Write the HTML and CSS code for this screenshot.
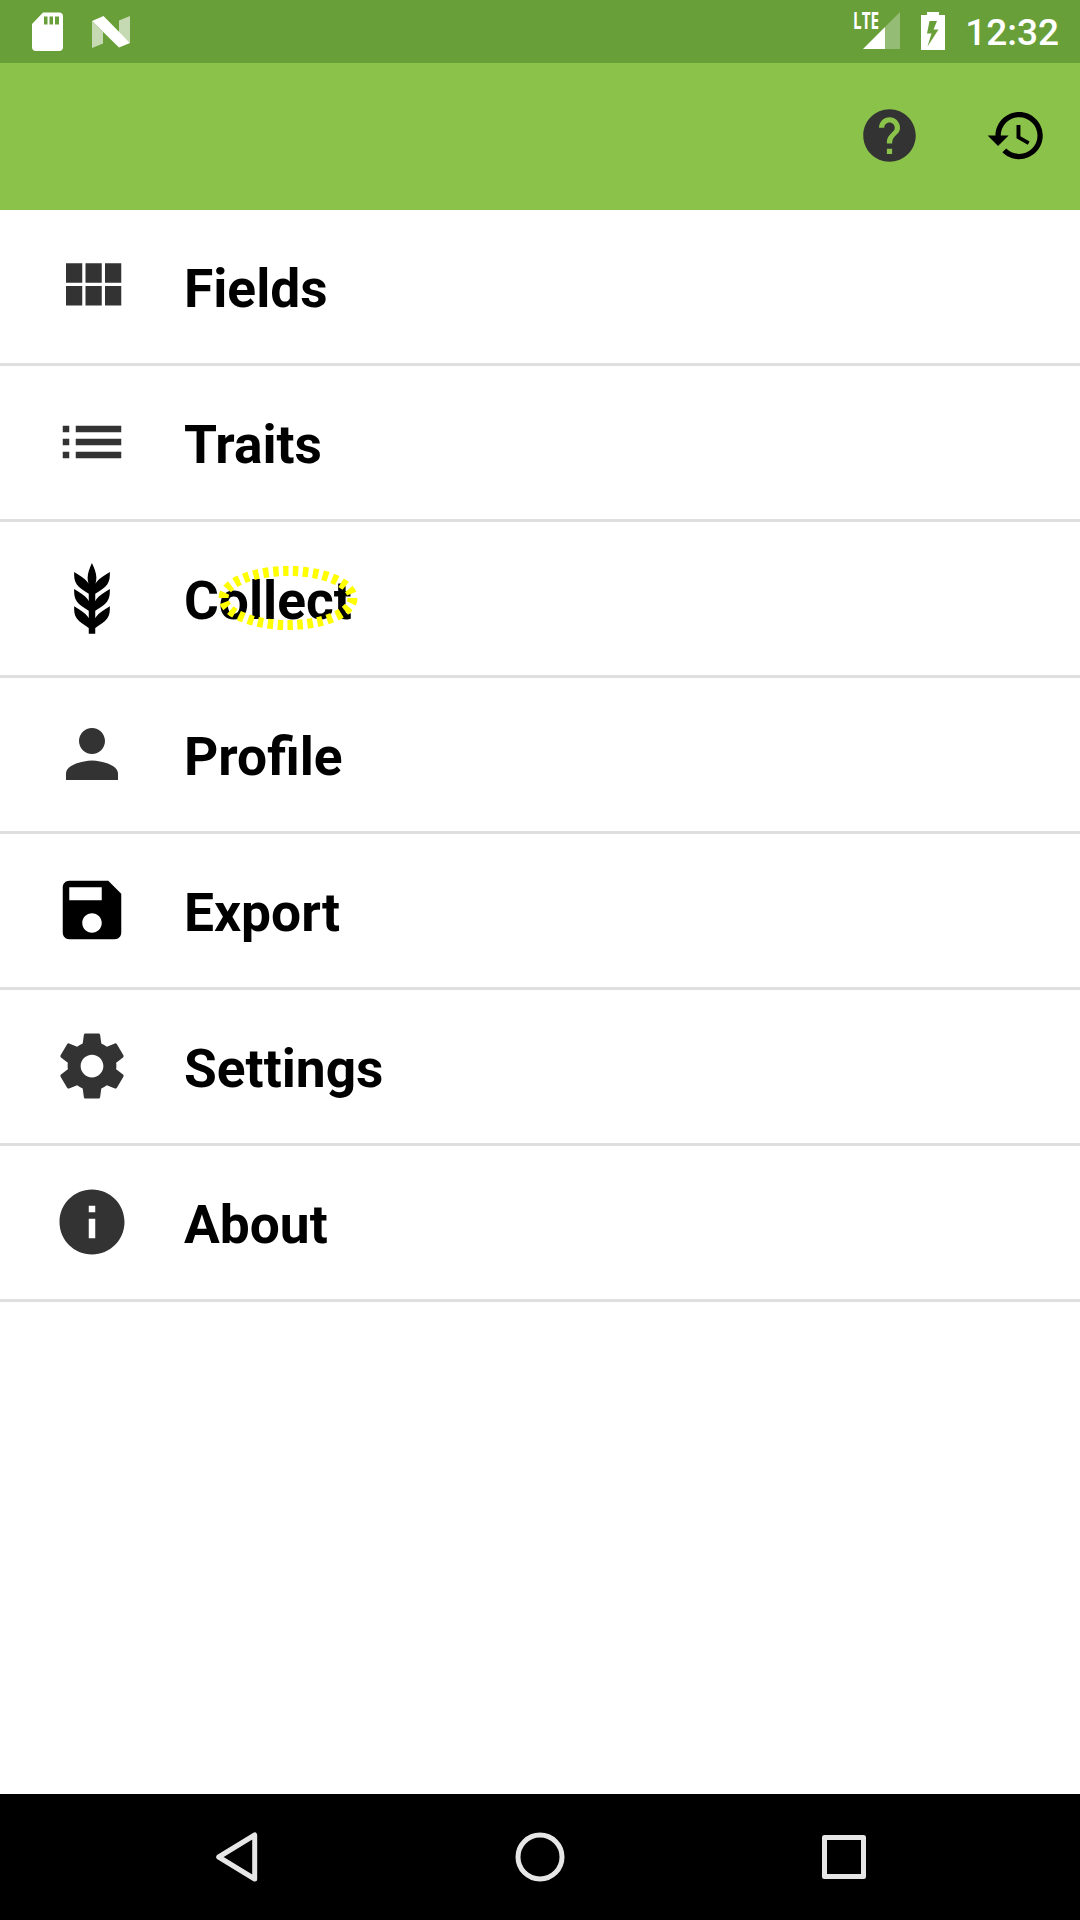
FILE: index.html
```html
<!DOCTYPE html>
<html lang="en">
<head>
<meta charset="utf-8">
<title>Field Book</title>
<link rel="stylesheet" href="styles.css">
</head>
<body>
<div class="screen">
  <div class="status-bar">
    <div class="status-group">
      <svg class="sd" viewBox="0 0 31 39" width="31" height="39"><path fill="#fff" fill-rule="evenodd" d="M11 .5H27a4 4 0 0 1 4 4V35a4 4 0 0 1-4 4H4a4 4 0 0 1-4-4V12ZM12 4.500v8h3.500v-8Zm5.500 0v8H21v-8Zm5.500 0v8h4v-8Z"/></svg>
      <svg class="nougat" viewBox="0 0 38 32" width="38" height="32"><path fill="#fff" opacity=".62" d="M0 5L11 16V27.500L0 32ZM38 0L27 4.500V17L38 27Z"/><path fill="#fff" d="M0 5L11.500 0L38 27L27 31.500Z"/></svg>
    </div>
    <div class="status-group">
      <div class="signal">
        <svg viewBox="0 0 37 37" width="37" height="37"><path fill="#fff" opacity=".3" d="M22 15L37 0V37H22Z"/><path fill="#fff" d="M0 37L22 15V37Z"/></svg>
        <span class="lte">LTE</span>
      </div>
      <svg class="battery" viewBox="0 0 24 38" width="24" height="38"><path fill="#fff" fill-rule="evenodd" d="M6 0H18V3H24V38H0V3H6ZM8.500 9L6 21.500H10.500L6.500 34.500L17.500 17.500H12.500L16 9Z"/></svg>
      <span class="clock">12:32</span>
    </div>
  </div>
  <header class="app-bar">
    <svg class="action help" viewBox="0 0 24 24"><path d="M12 2C6.480 2 2 6.480 2 12s4.480 10 10 10 10-4.480 10-10S17.520 2 12 2zm1 17h-2v-2h2v2zm2.070-7.750l-.9.920C13.450 12.900 13 13.500 13 15h-2v-.5c0-1.100.45-2.100 1.170-2.830l1.240-1.260c.37-.36.59-.86.59-1.410 0-1.100-.9-2-2-2s-2 .9-2 2H8c0-2.210 1.790-4 4-4s4 1.790 4 4c0 .88-.36 1.680-.93 2.250z"/></svg>
    <svg class="action history" viewBox="0 0 24 24"><path d="M13 3c-4.970 0-9 4.030-9 9H1l3.890 3.890.07.14L9 12H6c0-3.870 3.130-7 7-7s7 3.130 7 7-3.130 7-7 7c-1.930 0-3.680-.79-4.940-2.060l-1.420 1.420C8.270 19.990 10.510 21 13 21c4.970 0 9-4.030 9-9s-4.030-9-9-9zm-1 5v5l4.280 2.540.72-1.210-3.500-2.080V8H12z"/></svg>
  </header>
  <main class="menu">
    <div class="row"><svg class="icon" viewBox="0 0 24 24"><path d="M4 11h5V5H4v6zm0 7h5v-6H4v6zm6 0h5v-6h-5v6zm6 0h5v-6h-5v6zm-6-7h5V5h-5v6zm6-6v6h5V5h-5z"/></svg><span class="label">Fields</span></div>
    <div class="row"><svg class="icon" viewBox="0 0 24 24"><path d="M3 13h2v-2H3v2zm0 4h2v-2H3v2zm0-8h2V7H3v2zm4 4h14v-2H7v2zm0 4h14v-2H7v2zM7 7v2h14V7H7z"/></svg><span class="label">Traits</span></div>
    <div class="row"><svg class="icon black" viewBox="0 0 24 24"><path d="M7.330,18.330C6.500,17.170 6.500,15.830 6.500,14.500C8.170,15.500 9.830,16.500 10.670,17.670L11,18.230V15.950C9.500,15.050 8.080,14.130 7.330,13.080C6.500,11.920 6.500,10.580 6.500,9.250C8.170,10.250 9.830,11.250 10.670,12.420L11,13V10.700C9.500,9.800 8.080,8.880 7.330,7.830C6.500,6.670 6.500,5.330 6.500,4C8.170,5 9.830,6 10.670,7.170C10.770,7.310 10.860,7.460 10.940,7.620C10.770,7 10.660,6.420 10.650,5.820C10.640,4.310 11.300,2.760 11.960,1.210C12.650,2.690 13.340,4.180 13.350,5.690C13.360,6.320 13.250,6.960 13.070,7.590C13.150,7.450 13.230,7.310 13.330,7.170C14.170,6 15.830,5 17.500,4C17.500,5.330 17.500,6.670 16.670,7.830C15.920,8.880 14.500,9.800 13,10.700V13L13.330,12.420C14.170,11.250 15.830,10.250 17.500,9.250C17.500,10.580 17.500,11.920 16.670,13.080C15.920,14.130 14.500,15.050 13,15.950V18.230L13.330,17.670C14.170,16.500 15.830,15.500 17.500,14.500C17.500,15.830 17.500,17.170 16.670,18.330C15.920,19.380 14.500,20.300 13,21.200V23H11V21.200C9.500,20.300 8.080,19.380 7.330,18.330Z"/></svg><span class="label">Collect<svg class="highlight" viewBox="0 0 140 64" width="140" height="64"><ellipse cx="70" cy="32" rx="64.500" ry="27" pathLength="300" stroke-dasharray="5.500 4.500"/></svg></span></div>
    <div class="row"><svg class="icon" viewBox="0 0 24 24"><path d="M12 12c2.210 0 4-1.790 4-4s-1.790-4-4-4-4 1.790-4 4 1.790 4 4 4zm0 2c-2.670 0-8 1.340-8 4v2h16v-2c0-2.660-5.330-4-8-4z"/></svg><span class="label">Profile</span></div>
    <div class="row"><svg class="icon black" viewBox="0 0 24 24"><path d="M17 3H5c-1.110 0-2 .9-2 2v14c0 1.100.89 2 2 2h14c1.100 0 2-.9 2-2V7l-4-4zm-5 16c-1.660 0-3-1.340-3-3s1.340-3 3-3 3 1.340 3 3-1.340 3-3 3zm3-10H5V5h10v4z"/></svg><span class="label">Export</span></div>
    <div class="row"><svg class="icon" viewBox="0 0 24 24"><path d="M19.430 12.980c.04-.32.07-.64.07-.98s-.03-.66-.07-.98l2.110-1.650c.19-.15.24-.42.12-.64l-2-3.460c-.12-.22-.39-.3-.61-.22l-2.490 1c-.52-.4-1.080-.73-1.690-.98l-.38-2.650C14.460 2.180 14.250 2 14 2h-4c-.25 0-.46.18-.49.42l-.38 2.650c-.61.25-1.170.59-1.690.98l-2.490-1c-.23-.09-.49 0-.61.22l-2 3.460c-.13.22-.07.49.12.64l2.110 1.650c-.04.32-.07.65-.07.98s.03.66.07.98l-2.110 1.650c-.19.15-.24.42-.12.64l2 3.460c.12.22.39.3.61.22l2.490-1c.52.4 1.080.73 1.690.98l.38 2.650c.03.24.24.42.49.42h4c.25 0 .46-.18.49-.42l.38-2.650c.61-.25 1.170-.59 1.690-.98l2.490 1c.23.09.49 0 .61-.22l2-3.460c.12-.22.07-.49-.12-.64l-2.110-1.650zM12 15.500c-1.930 0-3.500-1.570-3.500-3.500s1.570-3.500 3.500-3.500 3.500 1.570 3.500 3.500-1.570 3.500-3.500 3.500z"/></svg><span class="label">Settings</span></div>
    <div class="row"><svg class="icon" viewBox="0 0 24 24"><path d="M12 2C6.480 2 2 6.480 2 12s4.480 10 10 10 10-4.480 10-10S17.520 2 12 2zm1 15h-2v-6h2v6zm0-8h-2V7h2v2z"/></svg><span class="label">About</span></div>
  </main>
  <nav class="nav-bar">
    <svg viewBox="0 0 50 50"><path d="M43.700 3V47L7.700 25Z"/></svg>
    <svg viewBox="0 0 50 50"><circle cx="25" cy="25" r="22"/></svg>
    <svg viewBox="0 0 50 50"><rect x="5.500" y="5.500" width="39" height="39"/></svg>
  </nav>
</div>
</body>
</html>
```
FILE: styles.css
```css
body {
  margin: 0;
  background: #fff;
  font-family: Roboto, "Liberation Sans", sans-serif;
}

svg {
  display: block;
  flex: none;
}

.screen {
  display: flex;
  flex-direction: column;
  width: 1080px;
  height: 1920px;
  overflow: hidden;
}

.status-bar {
  display: flex;
  justify-content: space-between;
  height: 63px;
  padding: 0 21px 0 32px;
  box-sizing: border-box;
  background: #689f38;
  color: #fff;
}

.status-group {
  display: flex;
  align-items: flex-start;
}

.sd {
  margin-top: 12px;
}

.nougat {
  margin: 16px 0 0 29px;
}

.signal {
  position: relative;
  margin: 12px 21px 0 0;
}

.lte {
  position: absolute;
  left: -10px;
  top: 0;
  font: bold 22.5px/18px "Open Sans", sans-serif;
  transform: scaleX(0.68);
  transform-origin: left;
}

.battery {
  margin: 12px 20px 0 0;
}

.clock {
  font-size: 37px;
  font-weight: 500;
  line-height: 66px;
}

.app-bar {
  display: flex;
  justify-content: flex-end;
  align-items: center;
  gap: 63.5px;
  height: 147px;
  padding: 0 32.5px 2px 0;
  box-sizing: border-box;
  background: #8bc34a;
}

.action {
  width: 63px;
  height: 63px;
}

.help {
  fill: #333;
}

.menu {
  flex: 1;
}

.row {
  display: flex;
  align-items: center;
  gap: 53px;
  height: 153px;
  padding-left: 53px;
  border-bottom: 3px solid #dfdfdf;
}

.icon {
  width: 78px;
  height: 78px;
  margin-bottom: 1px;
  fill: #333;
}

.black {
  fill: #000;
}

.label {
  position: relative;
  padding-top: 5px;
  font-size: 53.3px;
  font-weight: 700;
  line-height: 60px;
  color: #000;
}

.highlight {
  position: absolute;
  left: 34px;
  top: 0;
  fill: none;
  stroke: #ff0;
  stroke-width: 10px;
}

.nav-bar {
  display: flex;
  justify-content: center;
  align-items: center;
  gap: 254px;
  height: 126px;
  background: #000;
}

.nav-bar svg {
  width: 50px;
  height: 50px;
  fill: none;
  stroke: #e6e6e6;
  stroke-width: 5px;
  stroke-linejoin: round;
}
```
